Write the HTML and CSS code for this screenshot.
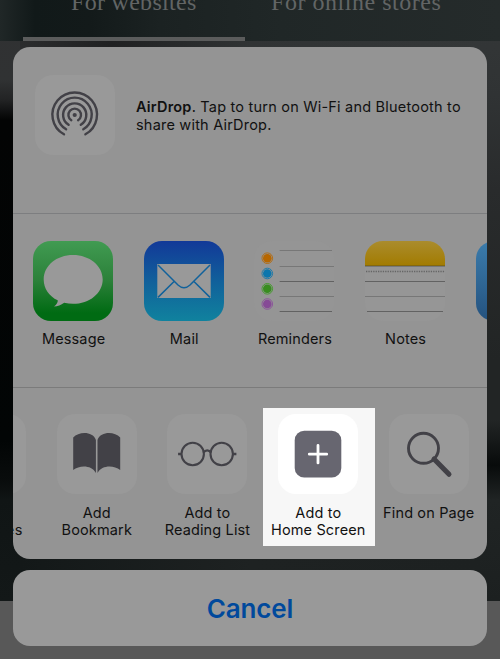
FILE: index.html
```html
<!DOCTYPE html>
<html lang="en">
<head>
<meta charset="utf-8">
<title>Share</title>
<link rel="stylesheet" href="styles.css">
</head>
<body>
<div class="screen">
  <nav class="tabs">
    <div class="tab active"><span class="tab-a">For websites</span></div>
    <div class="tab"><span class="tab-b">For online stores</span></div>
  </nav>
  <main class="sheet">
    <section class="airdrop">
      <div class="tile">
        <svg width="80" height="80" viewBox="0 0 80 80" fill="none" stroke="#424147" stroke-width="2.4" stroke-linecap="round">
          <circle cx="39.7" cy="40" r="2.1" fill="#424147" stroke="none"/>
          <path d="M36.3 45.2A6.3 6.3 0 1 1 43.1 45.2"/>
          <path d="M33.6 49.8A11.6 11.6 0 1 1 45.8 49.8"/>
          <path d="M31.1 54.3A17 17 0 1 1 48.3 54.3"/>
          <path d="M29 59.3A22.3 22.3 0 1 1 50.4 59.3"/>
        </svg>
      </div>
      <p><b>AirDrop</b>. Tap to turn on Wi-Fi and Bluetooth to<br>share with AirDrop.</p>
    </section>
    <section class="row apps">
      <div class="item">
        <svg width="80" height="80" viewBox="0 0 80 80">
          <defs><linearGradient id="green" x2="0" y2="1"><stop stop-color="#419b52"/><stop offset=".5" stop-color="#2b8039"/><stop offset=".9" stop-color="#006b13"/></linearGradient></defs>
          <rect width="80" height="80" rx="18" fill="url(#green)"/>
          <path fill="#999" d="M40 14C56.5 14 69.7 24.7 69.7 38.4S56.5 62.8 40 62.8C37 62.8 34 62.4 31.2 61.8C28 64.1 24.5 65.4 21 65.6C23.8 63.5 25 61.3 24.7 59.3C16 55 10.7 47.4 10.7 38.4C10.7 24.7 23.5 14 40 14Z"/>
        </svg>
        <span>Message</span>
      </div>
      <div class="item">
        <svg width="80" height="80" viewBox="0 0 80 80">
          <defs><linearGradient id="blue" x2="0" y2="1"><stop stop-color="#123998"/><stop offset=".5" stop-color="#11609b"/><stop offset="1" stop-color="#10829e"/></linearGradient></defs>
          <rect width="80" height="80" rx="18" fill="url(#blue)"/>
          <rect x="13.3" y="23" width="53.4" height="34" fill="#999"/>
          <path d="M14 24L34 44Q40 49.5 46 44L66 24M14 56.4L30.3 40.3M66 56.4L49.7 40.3" fill="none" stroke="#11629b" stroke-width="1.5"/>
        </svg>
        <span>Mail</span>
      </div>
      <div class="item">
        <svg width="80" height="80" viewBox="0 0 80 80">
          <rect width="80" height="80" rx="18" fill="#959595"/>
          <g stroke-width="1"><path stroke="#777" d="M25.6 9.5H78M25.6 25.5H80M25.6 55.5H80"/><path stroke="#626262" d="M25.6 40.5H80M25.6 70.5H78"/></g>
          <g fill="none">
            <g stroke="#b36e16"><circle cx="13.3" cy="17.2" r="5.3"/><circle cx="13.3" cy="17.2" r="4.3" fill="#b76700" stroke="none"/></g>
            <g stroke="#207ba9"><circle cx="13.3" cy="32.5" r="5.3"/><circle cx="13.3" cy="32.5" r="4.3" fill="#0b76ad" stroke="none"/></g>
            <g stroke="#499c32"><circle cx="13.3" cy="47.8" r="5.3"/><circle cx="13.3" cy="47.8" r="4.3" fill="#398d20" stroke="none"/></g>
            <g stroke="#8d589b"><circle cx="13.3" cy="63" r="5.3"/><circle cx="13.3" cy="63" r="4.3" fill="#864a96" stroke="none"/></g>
          </g>
        </svg>
        <span>Reminders</span>
      </div>
      <div class="item">
        <svg width="80" height="80" viewBox="0 0 80 80">
          <defs><linearGradient id="gold" x2="0" y2="1"><stop stop-color="#aa8c2d"/><stop offset="1" stop-color="#a27b00"/></linearGradient></defs>
          <rect width="80" height="80" rx="18" fill="#969696"/>
          <path d="M0 25V18A18 18 0 0 1 18 0H62A18 18 0 0 1 80 18V25Z" fill="url(#gold)"/>
          <path d="M0 24.5H80" stroke="#84680f"/><path d="M0 25.5H80" stroke="#777879"/>
          <path d="M1 30.5H80" stroke="#656565" stroke-width="1.3" stroke-dasharray="1.3 1.1"/>
          <path d="M0 55.5H80" stroke="#777"/><path d="M0 40.5H80M2 70.5H78" stroke="#626262"/>
        </svg>
        <span>Notes</span>
      </div>
      <div class="item">
        <svg width="80" height="80" viewBox="0 0 80 80">
          <defs><linearGradient id="sky" x2="0" y2="1"><stop stop-color="#3b7cac"/><stop offset="1" stop-color="#24527f"/></linearGradient></defs>
          <rect width="80" height="80" rx="18" fill="url(#sky)"/>
        </svg>
      </div>
    </section>
    <section class="row actions">
      <div class="item"><div class="tile"></div><span class="wide">Add to<br>Favorites</span></div>
      <div class="item">
        <div class="tile">
          <svg width="80" height="80" viewBox="0 0 80 80" fill="#424147">
            <path d="M16.2 23.5C21.7 17.5 35.7 17 38.9 26V59C34.7 51 22.7 51 16.2 56Z"/>
            <path d="M63.2 23.5C57.7 17.5 43.7 17 40.5 26V59C44.7 51 56.7 51 63.2 56Z"/>
          </svg>
        </div>
        <span>Add<br>Bookmark</span>
      </div>
      <div class="item">
        <div class="tile">
          <svg width="80" height="80" viewBox="0 0 80 80" fill="none" stroke="#424147" stroke-width="2.1">
            <circle cx="25.7" cy="40" r="11.2"/><circle cx="54.7" cy="40" r="11.2"/>
            <path d="M36.7 38.5C38.1 35.7 42.3 35.7 43.7 38.5"/>
            <path stroke-width="2.6" d="M11.1 40H14.6M65.9 40H69.4"/>
          </svg>
        </div>
        <span>Add to<br>Reading List</span>
      </div>
      <div class="item highlight">
        <div class="tile">
          <svg width="80" height="80" viewBox="0 0 80 80">
            <rect x="16.7" y="16.8" width="46.6" height="46.8" rx="9.5" fill="#676670"/>
            <path d="M31.3 40.2H48.7M40 31.5V48.9" stroke="#fff" stroke-width="2.8" stroke-linecap="round"/>
          </svg>
        </div>
        <span>Add to<br>Home Screen</span>
      </div>
      <div class="item">
        <div class="tile">
          <svg width="80" height="80" viewBox="0 0 80 80" fill="none" stroke="#424147">
            <circle cx="34.5" cy="34.3" r="15" stroke-width="2.9"/>
            <path d="M45 45L60 60.3" stroke-width="5" stroke-linecap="round"/>
          </svg>
        </div>
        <span>Find on Page</span>
      </div>
    </section>
  </main>
  <button class="cancel">Cancel</button>
</div>
</body>
</html>
```
FILE: styles.css
```css
* { box-sizing: border-box; }

body { margin: 0; }

.screen {
  width: 500px;
  height: 659px;
  overflow: hidden;
  font-family: Inter, "Liberation Sans", sans-serif;
  color: #111;
  background:
    linear-gradient(#585858, #585858) 0 601px / 500px 58px no-repeat,
    linear-gradient(90deg, #131818, #1e2222 50%, #1d2121) 20px 540px / 460px 50px no-repeat,
    linear-gradient(90deg, #2b2c2d, #202122 20%, #303334 50%, #343738) 20px 41px / 460px 20px no-repeat,
    linear-gradient(#343738 0, #303334 95px, #292b2c 190px, #222525 360px, #222525 420px, #080b0b 465px, #202424 500px, #1c2020 601px) 250px 0 / 250px 601px no-repeat,
    linear-gradient(#303132 0, #303233 80px, #222324 100px, #030404 120px, #020505 440px, #090c0c 480px, #101515 500px, #131818 601px);
}

.tabs {
  display: flex;
  height: 41px;
  padding-left: 23px;
  background: linear-gradient(90deg, #202727 0, #111919 35px, #131a1a 90px, #1b2222 160px, #202727 280px, #252b2b);
  font-family: "Liberation Serif", serif;
  font-size: 24px;
  line-height: 26px;
  color: #626565;
  white-space: nowrap;
}

.tab { width: 222px; }
.tab span { display: block; margin-top: -11px; }
.tab.active { border-bottom: 4px solid #5b5c5c; }
.tab-a { padding-left: 48px; letter-spacing: .3px; }
.tab-b { padding-left: 26px; letter-spacing: .53px; }

.sheet {
  width: 473.4px;
  height: 512.7px;
  margin: 5.8px 0 0 13.3px;
  overflow: hidden;
  border-radius: 17px;
  background: #949494;
}

.airdrop {
  display: flex;
  height: 167px;
  padding: 28.2px 0 0 21.7px;
  gap: 21px;
  border-bottom: 1.5px solid #7d7e80;
}

.airdrop p {
  margin: 23.5px 0 0;
  font-size: 14.5px;
  line-height: 17.3px;
  letter-spacing: .21px;
  white-space: nowrap;
}

.airdrop b { font-weight: 600; }

.tile {
  width: 80px;
  height: 80px;
  flex: none;
  border-radius: 18px;
  background: #999;
}

svg { display: block; }

.row { display: flex; }

.item {
  display: flex;
  flex-direction: column;
  flex: 0 0 110.67px;
  align-items: center;
}

.item span {
  margin-top: 9px;
  font-size: 14.5px;
  line-height: 17.3px;
  letter-spacing: .14px;
  text-align: center;
  white-space: nowrap;
}

.item .wide { padding-left: 6px; letter-spacing: .6px; }

.apps {
  height: 174px;
  padding: 27.2px 0 0 4.5px;
  border-bottom: 1.5px solid #7b7b7b;
}

.apps span { padding-left: 1px; }

.actions { margin-left: -82.5px; padding-top: 20.4px; }
.actions .item { padding-top: 6px; }
.actions span { margin-top: 9.5px; }

.actions .highlight {
  flex-basis: 112px;
  height: 138px;
  margin: 0 -1.33px 0 0;
  padding-right: 1px;
  background: #f7f7f7;
}

.highlight .tile { background: #fff; }

.cancel {
  display: block;
  width: 473.4px;
  height: 76px;
  margin: 10.8px 0 0 13.3px;
  padding: 1px 0 0;
  border: 0;
  border-radius: 17px;
  background: #999;
  color: #00499c;
  font: 600 26px/76px Inter, "Liberation Sans", sans-serif;
  letter-spacing: -.15px;
}
```
